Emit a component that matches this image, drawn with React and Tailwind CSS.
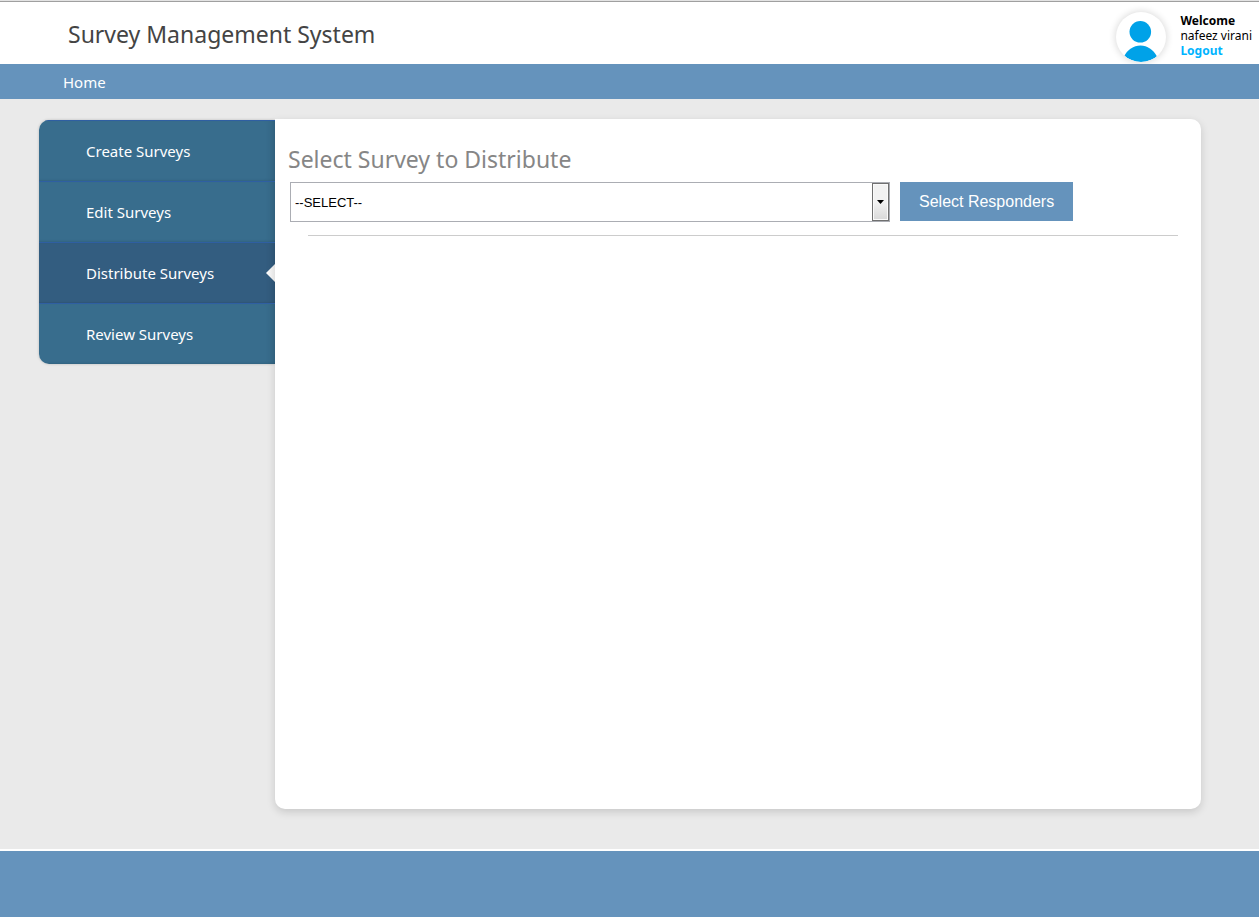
const menuItems = [
  { label: 'Create Surveys' },
  { label: 'Edit Surveys' },
  { label: 'Distribute Surveys', active: true },
  { label: 'Review Surveys' },
];

function Avatar() {
  return (
    <svg viewBox="0 0 50 50" className="size-[50px] rounded-full bg-white shadow-[0_0_7px_1px_rgba(0,0,0,0.14)]" aria-hidden="true">
      <clipPath id="avatar-disc">
        <circle cx="25" cy="25" r="25" />
      </clipPath>
      <g fill="#00a2e8" clipPath="url(#avatar-disc)">
        <circle cx="24.3" cy="19.8" r="10.8" />
        <path d="M8 44.5C11.5 37.5 17.500 33.500 24.500 33.500S37 37.500 41 44.500V50H8Z" />
      </g>
    </svg>
  );
}

function Header() {
  return (
    <header className="flex h-16 items-start border-t border-[#e3e3e3] bg-white">
      <div className="flex h-full w-full items-start justify-between border-t border-[#a0a0a0] pr-[7px] pl-[68px]">
        <h1 className="pt-4 text-[23px] leading-8 text-[#444444]">Survey Management System</h1>
        <div className="flex gap-[14px] pt-[10px]">
          <Avatar />
          <div className="pt-px text-xs leading-[15px] text-black">
            <p className="font-bold">Welcome</p>
            <p>nafeez virani</p>
            <a href="#logout" className="block font-bold text-[#00b4ff]">Logout</a>
          </div>
        </div>
      </div>
    </header>
  );
}

function Sidebar() {
  return (
    <nav aria-label="Surveys" className="mt-px w-[236px] shrink-0">
      <ul className="overflow-hidden rounded-l-[10px] shadow-[0_0_3px_rgba(0,0,0,0.2)]">
        {menuItems.map(({ label, active }) => (
          <li key={label}>
            <a
              href="#surveys"
              aria-current={active ? 'page' : undefined}
              className={
                'relative flex h-[61px] items-center border-t border-[#2f5fa2] pl-[47px] text-[15px] text-white shadow-[inset_-8px_0_8px_-7px_rgba(0,0,0,0.2),inset_0_-2px_2px_-1px_rgba(0,0,0,0.08)] ' +
                (active ? 'bg-[#335d80]' : 'bg-[#386d8d]')
              }
            >
              {label}
              {active && (
                <svg viewBox="0 0 9 18" className="absolute top-[21px] right-0 h-[18px] w-[9px]" aria-hidden="true">
                  <defs>
                    <linearGradient id="pointer-shade">
                      <stop offset="0" stopColor="#ffffff" />
                      <stop offset="1" stopColor="#e2e2e2" />
                    </linearGradient>
                  </defs>
                  <path d="M9 0L0 9L9 18Z" fill="url(#pointer-shade)" />
                </svg>
              )}
            </a>
          </li>
        ))}
      </ul>
    </nav>
  );
}

function SurveySelect() {
  return (
    <div className="relative w-[600px] max-w-full">
      <select
        id="survey"
        className="block h-10 w-full appearance-none rounded-none border border-[#abadb3] bg-white pt-px pr-5 pl-1 font-['Liberation_Sans',Arial,sans-serif] text-[13px] text-black"
      >
        <option>--SELECT--</option>
      </select>
      <span className="pointer-events-none absolute top-px right-px bottom-px flex w-[17px] items-center justify-center border border-[#707070] bg-linear-to-b from-[#f2f2f2] from-50% to-[#d8d8d8] shadow-[inset_0_0_0_1px_#fafafa]">
        <svg viewBox="0 0 7 4" className="h-1 w-[7px]" aria-hidden="true">
          <path d="M0 0H7L3.500 4Z" fill="#000000" />
        </svg>
      </span>
    </div>
  );
}

export default function App() {
  return (
    <div className="flex min-h-screen flex-col bg-[#eaeaea] font-['Noto_Sans','Open_Sans',sans-serif]">
      <Header />
      <nav aria-label="Main" className="flex h-[35px] items-center bg-[#6593bc] pt-px pl-[63px] text-[15px] text-white">
        <a href="#home">Home</a>
      </nav>
      <div className="flex flex-1 items-stretch pt-5 pr-[58px] pb-10 pl-[39px]">
        <Sidebar />
        <main className="min-w-0 flex-1 rounded-r-[10px] rounded-bl-[10px] bg-white pt-6 pr-[23px] pl-[13px] shadow-[0_3px_8px_rgba(0,0,0,0.15)]">
          <h2 className="text-[23px] leading-8 text-[#868686]">
            <label htmlFor="survey">Select Survey to Distribute</label>
          </h2>
          <form className="mt-[7px] flex items-start gap-[10px] pl-[2px]">
            <SurveySelect />
            <button
              type="button"
              className="h-[39px] shrink-0 bg-[#6593bc] px-[19px] font-['Liberation_Sans',Arial,sans-serif] text-base text-white"
            >
              Select Responders
            </button>
          </form>
          <hr className="mt-[13px] ml-5 border-[#cccccc]" />
        </main>
      </div>
      <footer className="h-[68px] border-t-2 border-white bg-[#6593bc]" />
    </div>
  );
}
